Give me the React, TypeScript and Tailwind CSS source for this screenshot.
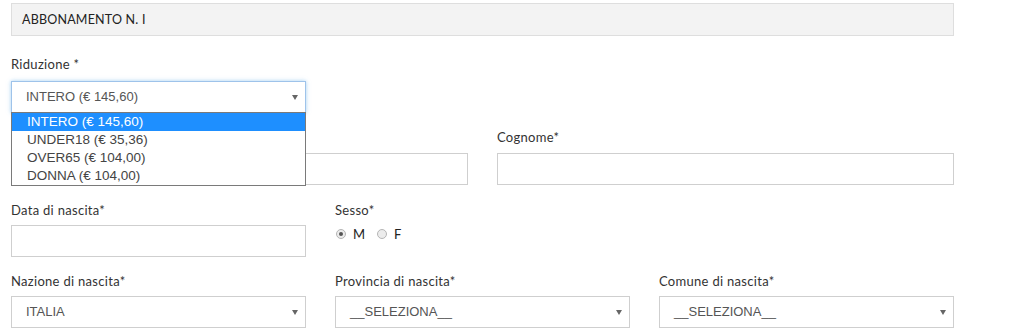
const labelCls = "block h-4 text-[13px] leading-4 tracking-[0.3px] text-[#333] font-['Lato','DejaVu_Sans',sans-serif]"
const inputCls = "block w-full h-[32px] border border-[#cfcfcf] bg-white"

function Arrow() {
  return (
    <svg width="6" height="5" viewBox="0 0 6 5" className="absolute right-[7px] top-[13px]">
      <polygon points="0,0 6,0 3,5" fill="#666" />
    </svg>
  )
}

function FakeSelect({ value, focused = false }: { value: string; focused?: boolean }) {
  return (
    <div
      className={
        "relative h-[32px] w-full bg-white border font-['Liberation_Sans',Arial,sans-serif] text-[13px] text-[#555] pl-[14px] leading-[30px] " +
        (focused ? "border-[#9ec3ea] shadow-[0_0_4px_rgba(102,175,233,0.6)]" : "border-[#cfcfcf]")
      }
    >
      {value}
      <Arrow />
    </div>
  )
}

function Radio({ checked }: { checked?: boolean }) {
  return (
    <span className="inline-flex items-center justify-center w-[10px] h-[10px] rounded-full border border-[#b5b5b5] bg-[#ececec]">
      {checked && <span className="w-[4px] h-[4px] rounded-full bg-[#555]" />}
    </span>
  )
}

export default function App() {
  const options = ["INTERO (€ 145,60)", "UNDER18 (€ 35,36)", "OVER65 (€ 104,00)", "DONNA (€ 104,00)"]
  return (
    <div className="bg-white w-[1030px] h-[329px] overflow-hidden">
      <div className="w-[943px] ml-[11px] pt-[3px]">
        <div className="h-[33px] bg-[#f3f3f3] border border-[#dedede] pl-[10px] text-[12.5px] leading-[31px] text-[#222] font-['Lato','DejaVu_Sans',sans-serif] tracking-[0.2px]">
          ABBONAMENTO N. I
        </div>

        <div className="mt-[20px] w-[295px] relative">
          <label className={labelCls}>Riduzione *</label>
          <div className="mt-[9px]">
            <FakeSelect value="INTERO (€ 145,60)" focused />
          </div>
          <ul className="absolute left-0 top-[56px] w-[295px] bg-white border border-[#7a7a7a] z-10 font-['Liberation_Sans',Arial,sans-serif] text-[13.5px] leading-[18px] text-[#444]">
            {options.map((o, i) => (
              <li key={o} className={"pl-[15px] h-[18px] " + (i === 0 ? "bg-[#1e8fff] text-white" : "")}>
                {o}
              </li>
            ))}
          </ul>
        </div>

        <div className="mt-[16px] grid grid-cols-2 gap-x-[29px]">
          <div>
            <label className={labelCls}>Nome*</label>
            <input className={inputCls + " mt-2"} />
          </div>
          <div>
            <label className={labelCls}>Cognome*</label>
            <input className={inputCls + " mt-2"} />
          </div>
        </div>

        <div className="mt-[17px] grid grid-cols-3 gap-x-[29px]">
          <div>
            <label className={labelCls}>Data di nascita*</label>
            <input className={inputCls + " mt-[7px]"} />
          </div>
          <div>
            <label className={labelCls}>Sesso*</label>
            <div className="mt-[8px] ml-[1px] flex items-center text-[13px] text-[#222] font-['Lato','DejaVu_Sans',sans-serif] leading-4">
              <Radio checked />
              <span className="ml-[7px]">M</span>
              <span className="ml-[12px] flex items-center">
                <Radio />
              </span>
              <span className="ml-[7px]">F</span>
            </div>
          </div>
          <div />
        </div>

        <div className="mt-[16px] grid grid-cols-3 gap-x-[29px]">
          <div>
            <label className={labelCls}>Nazione di nascita*</label>
            <div className="mt-[7px]">
              <FakeSelect value="ITALIA" />
            </div>
          </div>
          <div>
            <label className={labelCls}>Provincia di nascita*</label>
            <div className="mt-[7px]">
              <FakeSelect value="__SELEZIONA__" />
            </div>
          </div>
          <div>
            <label className={labelCls}>Comune di nascita*</label>
            <div className="mt-[7px]">
              <FakeSelect value="__SELEZIONA__" />
            </div>
          </div>
        </div>
      </div>
    </div>
  )
}
